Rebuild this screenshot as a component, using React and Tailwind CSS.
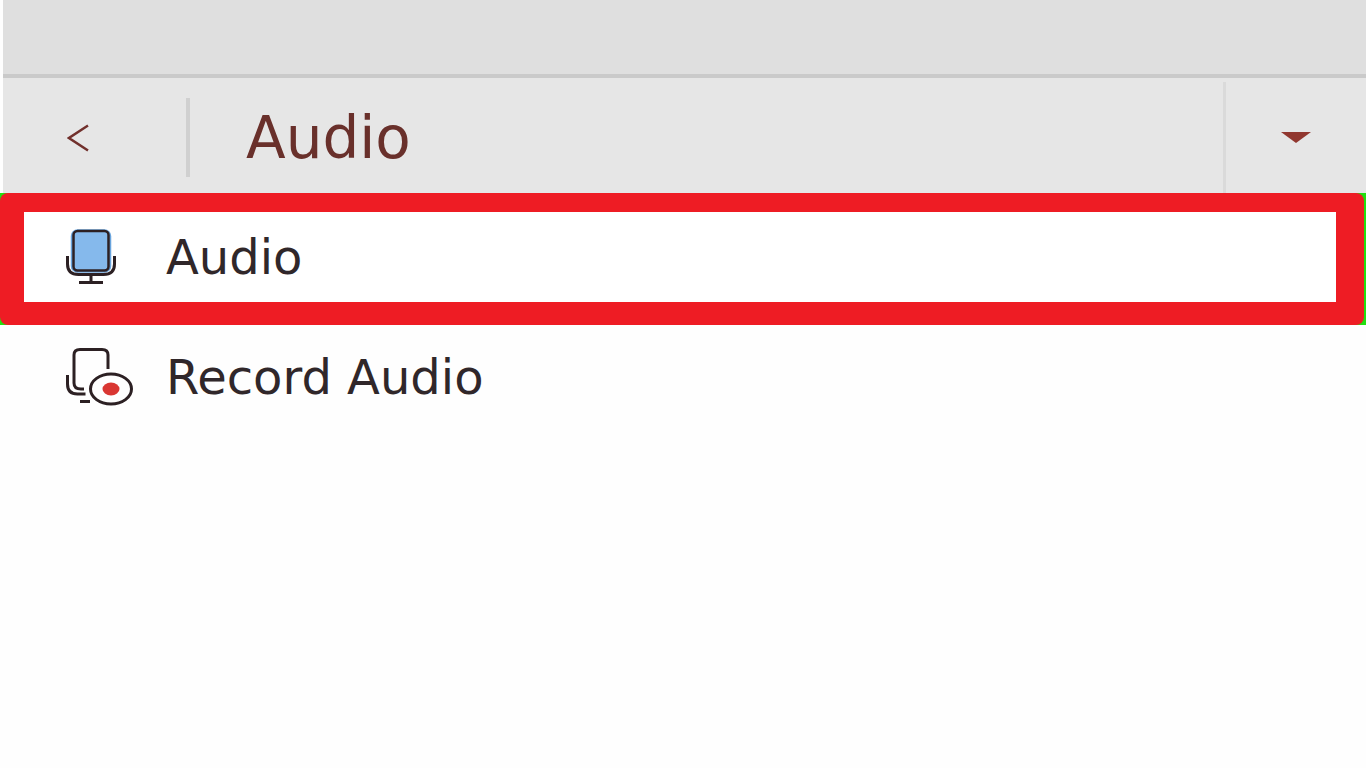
import React from 'react';

const MicIcon = () => (
  <svg width="52" height="56" viewBox="0 0 52 56" fill="none" stroke="#2c2023" strokeWidth="3" aria-hidden="true">
    <rect x="6.500" y="1" width="39" height="42" rx="6" fill="#85b9ec" stroke="#69a4dd" strokeWidth="1.500" />
    <rect x="8.500" y="2" width="35" height="39.500" rx="4" fill="#85b9ec" strokeWidth="2.500" />
    <path d="M2.500 27v8q0 10.500 11 10.500h25q11 0 11-10.500v-8" />
    <path d="M26 46v7M14 53.500h24" />
  </svg>
);

const RecordIcon = () => (
  <svg width="68" height="58" viewBox="0 0 68 58" fill="none" stroke="#2c2023" strokeWidth="3" aria-hidden="true">
    <path d="M19 41h-3q-7 0-7-6V7q0-5.500 6-5.500h22q6 0 6 5.500v14" />
    <path d="M2.500 27v9q0 10 10 10h8M15 53.500h10" />
    <ellipse cx="46" cy="41" rx="20.500" ry="15" />
    <ellipse cx="46" cy="41" rx="8.500" ry="6.500" fill="#d93632" stroke="none" />
  </svg>
);

const Header = () => (
  <header className="ml-[3px]">
    <div className="h-[74px] bg-[#dfdfdf]" />
    <div className="flex h-[119px] items-stretch border-t-4 border-[#cacaca] bg-[#e6e6e6] pt-1">
      <button type="button" aria-label="Back" className="flex w-[183px] items-center pl-16">
        <svg width="22" height="28" viewBox="0 0 22 28" fill="none" stroke="#71302c" strokeWidth="2.500" aria-hidden="true">
          <path d="M21 1.500L2 14l19 12.500" />
        </svg>
      </button>
      <div className="my-4 w-1 bg-[#d0d0d0]" />
      <h1 className="flex flex-1 items-center pl-14 text-[58px] leading-none text-[#69302b]">Audio</h1>
      <button
        type="button"
        aria-label="More options"
        className="flex w-[143px] items-center justify-center border-l-3 border-[#dadada]"
      >
        <svg width="30" height="13" viewBox="0 0 30 13" aria-hidden="true">
          <path d="M0 1h30L15 12z" fill="#91372f" />
        </svg>
      </button>
    </div>
  </header>
);

const App = () => {
  return (
    <div className="min-h-screen w-full bg-[#fefefe] font-['DejaVu_Sans','Roboto',sans-serif]">
      <Header />
      <ul className="text-[48px] leading-none text-[#30272a]">
        <li className="bg-[#22df10] pr-0.5">
          <button
            type="button"
            className="block w-full rounded-lg bg-[#ee1c24] pt-[19px] pr-7 pb-[23px] pl-6 text-left"
          >
            <span className="flex h-[90px] items-center bg-white pl-[41px]">
              <span className="w-[101px]">
                <MicIcon />
              </span>
              <span>Audio</span>
            </span>
          </button>
        </li>
        <li>
          <button type="button" className="flex h-[104px] w-full items-center pl-[65px] text-left">
            <span className="w-[101px]">
              <RecordIcon />
            </span>
            <span>Record Audio</span>
          </button>
        </li>
      </ul>
    </div>
  );
};

export default App;
